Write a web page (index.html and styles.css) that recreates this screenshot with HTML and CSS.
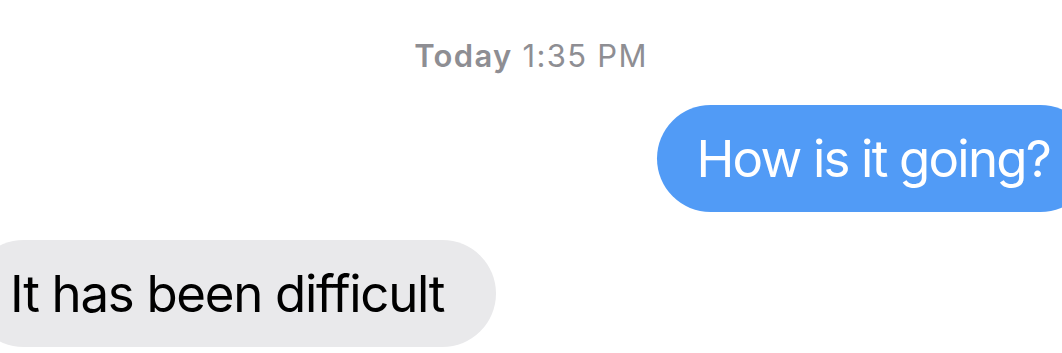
FILE: index.html
```html
<!DOCTYPE html>
<html>
<head>
<meta charset="utf-8">
<link rel="stylesheet" href="styles.css">
</head>
<body>
<div class="thread">
  <div class="stamp"><span class="day">Today</span> 1:35 PM</div>
  <div class="bubble sent">How is it going?</div>
  <div class="bubble recv">It has been difficult</div>
</div>
</body>
</html>
```
FILE: styles.css
```css
html, body {
  margin: 0;
  padding: 0;
  background: #ffffff;
  overflow: hidden;
}
.thread {
  width: 1062px;
  height: 353px;
  display: flex;
  flex-direction: column;
  font-family: "Inter", "Liberation Sans", sans-serif;
  overflow: hidden;
}
.stamp {
  align-self: center;
  padding-top: 38px;
  font-size: 31px;
  line-height: 36px;
  letter-spacing: 1.3px;
  color: #8e8e93;
  margin-bottom: 31px;
}
.day {
  font-weight: 600;
}
.bubble {
  font-size: 51px;
  line-height: 61px;
  padding: 23px 44px 23px 39px;
  border-radius: 54px;
  white-space: nowrap;
}
.sent {
  align-self: flex-end;
  background: #519bf6;
  color: #ffffff;
  letter-spacing: -1.8px;
  margin-right: -32px;
}
.recv {
  align-self: flex-start;
  background: #e9e9eb;
  color: #000000;
  letter-spacing: -1.3px;
  margin-top: 28px;
  margin-left: -30px;
  padding-left: 40px;
  padding-right: 52px;
}
```
